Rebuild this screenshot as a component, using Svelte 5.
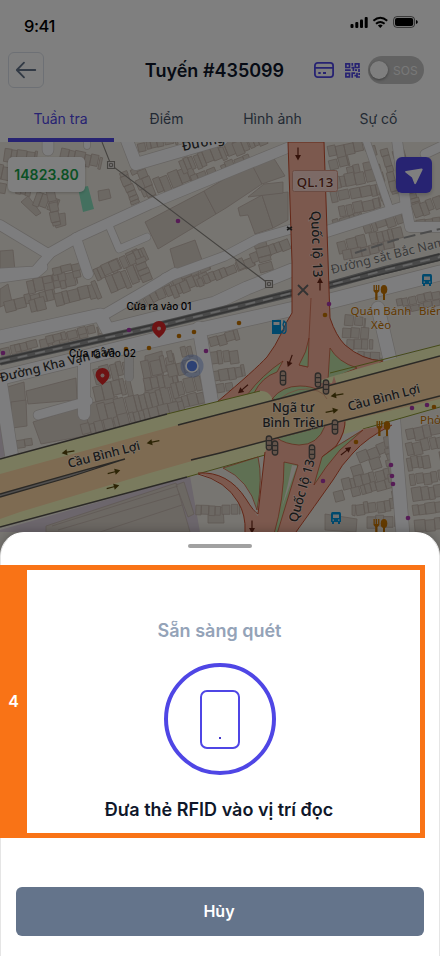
<script>
  const tabs = ['Tuần tra', 'Điểm', 'Hình ảnh', 'Sự cố'];

  // Rows of houses: x, y, angle, length, depth
  const rows = [
    [0, 146, 8, 38, 15], [0, 163, 12, 60, 15], [0, 181, 10, 32, 10], [62, 147, 12, 42, 14],
    [66, 160, 12, 20, 12], [38, 190, 20, 24, 16], [55, 190, 78, 35, 10],
    [128, 170, 68, 34, 9], [140, 166, 65, 30, 10],
    [152, 178, -22, 46, 17], [146, 168, 68, 30, 10], [178, 160, -22, 96, 15], [190, 176, -22, 62, 10], [218, 147, -22, 60, 14], [137, 143, -12, 40, 9],
    [3, 300, -14, 52, 12], [26, 280, -12, 50, 15], [28, 298, -14, 70, 15], [90, 280, -22, 50, 20], [42, 276, -12, 38, 8],
    [52, 268, -13, 28, 8], [92, 268, -24, 60, 14], [108, 262, -24, 35, 12],
    [0, 348, -13, 100, 10], [14, 344, -14, 82, 8], [98, 334, -14, 50, 5],
    [145, 256, 68, 24, 12], [128, 300, -28, 60, 15], [155, 290, -22, 55, 13],
    [170, 276, -24, 40, 10], [196, 278, -22, 60, 10], [235, 259, -22, 56, 12], [268, 240, 75, 30, 14],
    [92, 367, -14, 36, 17], [92, 385, -13, 38, 18], [96, 403, -14, 80, 20], [143, 378, -12, 34, 14],
    [140, 360, -12, 34, 18], [166, 350, -14, 28, 12], [166, 365, -14, 28, 14], [170, 382, -14, 30, 16], [175, 397, -14, 28, 13], [80, 424, -14, 105, 13],
    [208, 337, -16, 30, 11], [208, 352, -8, 30, 14], [212, 370, -10, 32, 12], [216, 384, -10, 16, 9],
    [327, 146, -12, 40, 13], [328, 160, -14, 20, 12], [346, 166, -12, 28, 14], [330, 177, -12, 50, 13], [330, 192, -12, 52, 12], [330, 207, -12, 50, 12], [332, 220, -18, 30, 7],
    [376, 145, 75, 60, 9], [388, 148, 75, 46, 8], [405, 148, 74, 60, 12], [411, 205, -20, 30, 14], [410, 221, -8, 30, 8],
    [336, 240, -14, 66, 14], [342, 250, -12, 52, 10], [362, 223, -18, 40, 12],
    [340, 314, 5, 26, 11], [343, 326, 4, 26, 12], [347, 338, 2, 26, 12], [358, 350, 3, 22, 10], [370, 358, 0, 12, 9],
    [396, 299, -12, 44, 8], [406, 306, -12, 34, 6],
    [356, 453, -22, 38, 12], [350, 466, -18, 46, 12], [341, 479, -14, 53, 12], [333, 492, -15, 65, 11], [355, 503, -8, 42, 12], [367, 515, 0, 34, 12],
    [390, 436, 80, 90, 8], [405, 428, -12, 40, 13], [405, 443, -13, 36, 13], [406, 457, -10, 34, 14], [409, 474, -8, 32, 12], [411, 488, -9, 30, 14], [412, 505, -8, 30, 12], [414, 519, -5, 28, 12],
    [196, 505, 2, 26, 10], [222, 503, 0, 18, 11],
    [16, 440, -8, 16, 8],
  ];

  let seed = 11;
  const rnd = () => {
    seed = (seed * 16807) % 2147483647;
    return seed / 2147483647;
  };
  const houses = rows.map(([x, y, a, len, d]) => {
    let out = '';
    let p = 0;
    while (p < len) {
      const w = Math.min(len - p, 4 + rnd() * 7);
      const t = rnd() * d * 0.2;
      const h = d * (0.78 + rnd() * 0.2);
      if (rnd() > 0.08) out += `M${p.toFixed(1)} ${t.toFixed(1)}h${w.toFixed(1)}v${h.toFixed(1)}h${(-w).toFixed(1)}z`;
      p += w + (rnd() > 0.75 ? 1.5 : 0);
    }
    return { x, y, a, d: out };
  });

  const bigBuildings = [
    'M145 222 204 191 216 214 158 249z', 'M204 191 252 163 262 184 226 208 216 214z', 'M252 165 273 157 285 176 262 184z',
    'M238 208 262 195 273 228 255 234 248 215 240 216z', 'M262 195 288 192 288 220 273 228z', 'M248 197 264 184 283 182 283 193z',
    'M170 249 195 240 202 260 176 272z', 'M0 251 13 250 15 271 0 274z', 'M0 289 8 284 12 302 0 307z',
    'M21 202 28 196 41 213 36 216z', 'M98 191 109 189 111 198 99 201z', 'M52 215 65 213 66 225 56 228z',
    'M26 391 76 378 77 400 28 404z', 'M4 388 24 382 26 405 6 410z', 'M145 356 162 351 165 395 145 400z',
    'M11 402 26 400 27 426 12 428z', 'M33 422 86 405 95 434 41 444z', 'M84 405 117 396 124 426 90 432z', 'M46 526 176 483 190 532 46 532z',
    'M176 485 184 482 194 514 188 517z', 'M325 514 357 519 356 532 325 530z', 'M352 505 356 505 355 516 352 515z', 'M208 507 223 507 224 523 208 523z',
  ];

  const roads = [
    [10, 'M0 225 48 254 80 236 150 204 292 146'], [9, 'M0 273 35 271 50 254'], [10, 'M76 238 88 274'], [7, 'M108 223 119 249 147 237'],
    [11, 'M48 138V150'], [6, 'M87 138V146'], [12, 'M126 138 136 164 222 139'],
    [11, 'M0 277 36 272 42 267'], [9, 'M165 278 225 256 257 239 295 228'], [10, 'M102 316 145 291 175 273'],
    [13, 'M0 337 100 315 108 330 215 303 247 288 292 270'],
    [14, 'M0 378 150 341 292 309'], [15, 'M326 302 440 273'], [12, 'M84 360V414'], [13, 'M0 380 12 458'],
    [13, 'M199 328 213 410'], [8, 'M129 358V377'], [9, 'M38 415 88 401'],
    [7, 'M366 140 389 207'], [10, 'M397 140 406 207 410 227 440 227'], [11, 'M325 232 404 207'], [9, 'M425 154 444 145'],
    [13, 'M378 308 391 364'], [13, 'M393 412 403 535'],
  ];

  const dots = [
    [178, 221, 'p'], [3, 353, 'p'], [129, 330, 'p'], [206, 351, 'p'], [329, 304, 'p'], [412, 408, 'p'], [427, 405, 'p'],
    [391, 465, 'p'], [392, 476, 'p'], [393, 484, 'p'], [408, 518, 'p'], [323, 481, 'p'],
    [126, 349, 'o'], [149, 348, 'o'], [179, 336, 'o'], [194, 332, 'o'], [239, 323, 'o'], [325, 315, 'o'], [356, 442, 'o'], [434, 407, 'o'],
  ];
  const arrows = [
    [298, 154, 90], [320, 284, -90], [290, 361, 110], [243, 389, 140], [337, 395, 170], [68, 452, 170], [153, 442, 168],
    [114, 472, -15], [113, 487, -15], [332, 411, -12], [346, 451, -38], [252, 527, 90],
  ];
  const signals = [[283, 378], [318, 380], [326, 387], [269, 443], [275, 448], [312, 452], [335, 427]];
  const food = [[380, 292], [383, 428], [380, 526]];
  const buses = [[427, 280], [336, 518]];
  const pins = [[159, 338], [102.5, 385]];
</script>

<div class="screen">
  <div class="page">
    <header>
      <div class="status">
        <span class="time">9:41</span>
        <svg width="69" height="14" viewBox="0 0 69 14">
          <rect x="0.5" y="8" width="3" height="4" rx="1" /><rect x="5.3" y="6" width="3" height="6" rx="1" />
          <rect x="10" y="3.5" width="3" height="8.5" rx="1" /><rect x="14.7" y="1" width="3" height="11" rx="1" />
          <g fill="none" stroke="#000" stroke-width="2"><path d="M23.4 4.7q6.9-6 13.8 0M26 7.8q4.3-3.6 8.6 0" /></g>
          <path d="M27.9 9.6q2.4-2 4.8 0L30.3 12z" />
          <rect x="43.6" y=".6" width="21" height="10.8" rx="3.3" fill="none" stroke="#000" stroke-opacity=".6" />
          <rect x="45" y="2" width="18.2" height="8" rx="2" /><path d="M66 4q1.8.5 1.8 2T66 8z" />
        </svg>
      </div>
      <div class="bar">
        <button class="back" aria-label="Quay lại">
          <svg width="22" height="18" viewBox="0 0 22 18" fill="none" stroke="#64748b" stroke-width="1.8" stroke-linecap="round" stroke-linejoin="round"><path d="M20.3 9H2M9 1.7 1.8 9 9 16.3" /></svg>
        </button>
        <h1>Tuyến #435099</h1>
        <div class="tools">
          <svg width="20" height="16" viewBox="0 0 20 16" fill="none" stroke="#4f46e5" stroke-width="1.8"><rect x=".9" y=".9" width="18.2" height="14.2" rx="2.8" /><path d="M1 5.9h18M4.3 11h2.4M9 11h3" /></svg>
          <svg width="15" height="15" viewBox="0 0 15 15" fill="none" stroke="#4f46e5" stroke-width="1.7">
            <path d="M.9.9h3.6v3.6H.9zM10.3.9h3.6v3.600h-3.600zM.9 10.3h3.6v3.6H.9zM7.3 0v2.7M6.400 4.7h2V8M0 7.2h5.7M10 7.2h2M14 6v3M7.2 14.8v-4.7h3M9.4 12.700H12v-3M11 14h4M14.2 10v2" />
          </svg>
          <div class="toggle"><i></i><span>SOS</span></div>
        </div>
      </div>
      <nav>
        {#each tabs as tab, i}
          <span class:active={i === 0}>{tab}</span>
        {/each}
      </nav>
    </header>

    <div class="map">
      <svg class="tiles" width="440" height="420" viewBox="0 142 440 420">
        <rect y="142" width="440" height="420" fill="#efebe2" />
        <path d="M0 415 8 455 0 458zM0 530 190 476 200 532H0z" fill="#d8ccd8" />
        <path d="M78 188 88 186 94 209 83 212z" fill="#88e0be" />
        <g fill="#d9d0c7" stroke="#c0b3a9" stroke-width=".8">
          {#each bigBuildings as d}<path {d} />{/each}
          {#each houses as h}<path d={h.d} transform="translate({h.x} {h.y}) rotate({h.a})" />{/each}
          <path d="M52 526 178 486M58 530 180 494M100 532 182 505" fill="none" />
        </g>
        <g fill="none" stroke-linecap="round" stroke-linejoin="round">
          {#each roads as [w, d]}<path {d} stroke="#cfcac6" stroke-width={w + 1.4} />{/each}
          {#each roads as [w, d]}<path {d} stroke="#fafafc" stroke-width={w} />{/each}
        </g>
        <path d="M129 358V377" stroke="#cbc7c2" stroke-width="10" stroke-linecap="round" stroke-dasharray=".5 3" opacity=".5" />

        <g fill="none">
          <path d="M0 361.5 150 328 240 306 292 293 330 285 385 270 440 257" stroke="#929292" stroke-width="8" />
          <path d="M0 359 150 325.5 240 303.5 292 291 330 283 385 268 440 254M0 364 150 330.5 240 308.5 292 295 330 287 440 260" stroke="#6a6a6a" stroke-width="1.5" />
          <path d="M0 361.5 150 328 240 306 292 293 330 285 385 270 440 257" stroke="#ccc" stroke-width="1.8" stroke-dasharray="10 8" />
          <path d="M355 253 395 240 440 229" stroke="#999" stroke-width="2" stroke-dasharray="12 5" />
        </g>

        <path d="M217 402Q255 370 267 357 276 345 281 334 286 322 292 313V262L288 142H324L330 318Q336 336 345 345 362 360 383 361L355 377 330 390 320 420 250 430z" fill="#f9b29c" stroke="#c84e2f" stroke-width="1" />
        <path d="M311 298 309 338M308 367 299 365" stroke="#d0694c" stroke-width=".8" fill="none" />
        <g fill="#bfe0a6" stroke="#c84e2f" stroke-width=".7">
          <path d="M309 338 308 367 299 365Q307 352 309 338z" /><path d="M330 348Q338 362 357 368L328 380z" />
          <path d="M283 361 277 372Q262 377 254 393L247 395Q262 375 283 361z" />
        </g>
        <path d="M0 459 167 414 260 391Q268 390 272 398L330 377 440 345V407L363 429 220 467 187 477 0 527z" fill="#f4f7bd" />
        <path d="M167 414 260 391M330 373 440 345M187 477 265 455M363 429 440 407" fill="none" stroke="#8b9630" />
        <path d="M270 404 273 396Q284 383 304 383H332L334 376 340 395 320 410z" fill="#f9b29c" />
        <path d="M198 473Q228 471 246 499 254 512 258 516L265 452 272 436 345 414Q347 432 337 446L322 457 337 446 363 429 392 425Q366 438 353 453 342 464 333 480 314 507 300 526L296 534H245Q246 515 238 502 226 481 198 473z" fill="#f9b29c" />
        <path d="M198 473Q228 471 246 499 254 512 258 514L265 452M345 418Q346 432 336 446L322 457M392 425Q366 438 353 453 342 464 333 480 314 507 296 532M198 474Q226 481 238 502 246 515 245 532" fill="none" stroke="#c84e2f" />
        <g fill="#bfe0a6" stroke="#c84e2f" stroke-width=".7">
          <path d="M272 399Q282 386 300 386 312 386 320 391L300 403z" />
          <path d="M277 438 325 426Q318 445 299 445 285 444 277 438z" />
          <path d="M223 468 258 457Q263 478 257 510 249 480 223 468z" /><path d="M284 462 298 465 277 534H274Q284 500 284 462z" />
          <path d="M322 457 337 446 363 430 340 450Q325 467 314 485z" />
        </g>
        <path d="M292 465 297 466 282 507Q288 486 292 465z" fill="#f0ece2" />
        <path d="M0 474 178 425 290 396 440 356V399L338 423 220 453 150 473 20 512 0 519z" fill="#fcd6a4" />
        <path d="M278 400Q298 384 318 391 325 394 327 399" fill="none" stroke="#e3a985" />
        <g fill="none" stroke="#57534c" stroke-width="1.5">
          <path d="M0 459 167 414M178 425 290 396 440 356M191 460 220 453 338 422 440 396M0 527 187 477" />
          <path d="M0 494 70 474 125 459 70 477 0 497" fill="#a4a1a0" stroke-width="1.3" />
        </g>

        <g fill="none" stroke="#8a8680" stroke-width="1.1">
          <path d="M102 142 111 165 269 284" />
          <g fill="#e6e2df"><path d="M107.500 161.500h7v7h-7zM265.500 280.500h7v7h-7z" /></g>
          <circle cx="111" cy="165" r="1.700" /><circle cx="269" cy="284" r="1.700" />
          <path d="M298 285 308 295M308 285 298 295" stroke="#666" stroke-width="1.800" />
          <path d="M287 227 292 230M287 230 292 227" stroke="#333" stroke-width="1.500" />
        </g>
        {#each signals as [x, y]}
          <g transform="translate({x} {y})" fill="#c9a894" stroke="#5a5653" stroke-width="1.300"><rect x="-2.700" y="-7" width="5.400" height="14" rx="2.500" /><path d="M-2.500-2.300h5M-2.500 2.300h5" /></g>
        {/each}
        {#each arrows as [x, y, a]}
          <path d="M-6.500-.6H1V-3L6.500 0 1 3V.6H-6.500z" transform="translate({x} {y}) rotate({a})" fill={y < 400 && x < 330 || x === 252 || x === 346 ? '#6b2717' : '#59480b'} />
        {/each}
        {#each dots as [x, y, k]}<circle cx={x} cy={y} r="2.300" fill={k === 'p' ? '#ac39ac' : '#c77400'} />{/each}
        {#each food as [x, y]}
          <g transform="translate({x} {y})" fill="#c77400"><path d="M-6.500-7h1.300v5h1v-5h1.300v5h1v-5h1.300v6L-2.500 1v7h-2.300V1L-6.500-1z" /><ellipse cx="4" cy="-2.500" rx="3.300" ry="4.500" /><path d="M3 1h2v7H3z" /></g>
        {/each}
        {#each buses as [x, y]}
          <g transform="translate({x} {y})"><path d="M-3.500-6h7q1.500 0 1.500 2V4H4v2H2V4h-4v2h-2V4h-1v-8q0-2 1.500-2z" fill="#0092da" /><path d="M-3-3.500h6V0h-6zM-3.500 1.500h1.500v1.300h-1.500zM2 1.500h1.500v1.300H2z" fill="#e5e5e5" /></g>
        {/each}
        <g transform="translate(272 320)"><path d="M0 0h9v14H0z" fill="#0092da" /><path d="M1.500 2h6v3h-6z" fill="#eee" /><path d="M9 11q3 1 3-2V7l-1-2 1-4 2 2v8q-1 4-5 1" fill="none" stroke="#0092da" stroke-width="1.300" /></g>

        <g class="labels">
          <rect x="292.500" y="170.500" width="45" height="21" rx="2" fill="#f8d5cc" stroke="#d69886" />
          <text x="315" y="187" text-anchor="middle" font-size="13.200" letter-spacing=".1" fill="#6d2a18">QL.13</text>
          <text transform="translate(311 211) rotate(88)" font-size="13.200">Quốc lộ 13</text>
          <text class="thin" transform="translate(332 274) rotate(-14)" font-size="12.500" fill="#777">Đường sắt Bắc Nam</text>
          <text transform="translate(183 151) rotate(-12)" font-size="13">Đường</text>
          <text transform="translate(1 382) rotate(-13.800)" font-size="12.400">Đường Kha Vạn Cân</text>
          <text transform="translate(69 468) rotate(-14.500)" font-size="12.400">Cầu Bình Lợi</text>
          <text transform="translate(349 411) rotate(-14.500)" font-size="12.400">Cầu Bình Lợi</text>
          <text x="293" y="412" text-anchor="middle" font-size="12.700">Ngã tư</text>
          <text x="293" y="427" text-anchor="middle" font-size="12.700">Bình Triệu</text>
          <text transform="translate(297 523) rotate(-74)" font-size="12.800">Quốc lộ 13</text>
          <g class="thin" fill="#c77400" font-size="11.500"><text x="381" y="315" text-anchor="middle">Quán Bánh</text><text x="381" y="329" text-anchor="middle">Xèo</text><text x="419" y="315">Biển</text><text x="420" y="424">Phở</text></g>
        </g>

        {#each pins as [x, y]}
          <g transform="translate({x} {y})"><path d="M0 0Q-7-6-7-10a7 7 0 0 1 14 0Q7-6 0 0z" fill="#dc2626" /><circle cy="-9.500" r="2" fill="#e5c5bd" /></g>
        {/each}
        <circle cx="192" cy="366" r="11.500" fill="#5b82db" opacity=".4" />
        <circle cx="192" cy="366" r="6" fill="#5b82e8" stroke="#fff" stroke-width="1.700" />
        <g class="points"><text x="126.500" y="310" textLength="65">Cửa ra vào 01</text><text x="69" y="357" textLength="67">Cửa ra vào 02</text></g>
      </svg>
      <div class="controls">
        <strong>14823.80</strong>
        <button aria-label="Định vị"><svg width="18" height="17" viewBox="0 0 18 17"><path d="M.5 4.500Q-.5 3.500 1 3L16.500.5Q18 .5 17.500 2L11 15.500Q10 17 9.300 15.500L7 9.500z" fill="#fff" /></svg></button>
      </div>
    </div>
  </div>

  <div class="backdrop"></div>

  <section class="sheet">
    <div class="handle"></div>
    <div class="scan">
      <div class="step">4</div>
      <div class="content">
        <p class="ready">Sẵn sàng quét</p>
        <div class="ring"><div class="phone"><i></i></div></div>
        <p class="hint">Đưa thẻ RFID vào vị trí đọc</p>
      </div>
    </div>
    <button class="cancel">Hủy</button>
  </section>
</div>

<style>
  :global(body) { background: #fff; overflow: hidden; }
  * { box-sizing: border-box; margin: 0; }
  .screen { position: relative; width: 440px; height: 956px; overflow: hidden; display: flex; flex-direction: column; font-family: Inter, "Noto Sans", sans-serif; color: #0f172a; }
  .page { height: 532px; flex: none; }
  button { border: 0; padding: 0; font: inherit; display: flex; align-items: center; justify-content: center; }
  header { height: 142px; background: #fff; display: flex; flex-direction: column; }
  .status { height: 52px; display: flex; justify-content: space-between; align-items: flex-start; padding: 16px 21px 0 24px; }
  .status svg { margin-top: 0; }
  .time { font-size: 16.5px; line-height: 20px; font-weight: 500; color: #000; letter-spacing: -.4px; }
  .bar { height: 36px; display: grid; grid-template-columns: 100px 214px 102px; align-items: center; padding: 0 16px 0 8px; }
  .back { width: 36px; height: 36px; background: #fff; border: 1px solid #dbe1ea; border-radius: 6px; }
  h1 { font-size: 18px; line-height: 28px; font-weight: 600; text-align: center; padding-top: 2px; margin-left: -1px; }
  .tools { display: flex; align-items: center; gap: 11px; margin-left: -8px; flex: none; }
  .tools svg { flex: none; }
  .toggle { width: 56px; height: 28px; border-radius: 14px; background: #c4c4c4; display: flex; align-items: center; padding-left: 2px; flex: none; margin-left: -3px; }
  .toggle i { width: 18px; height: 18px; border-radius: 50%; background: #fff; box-shadow: 0 1px 3px #0006; }
  .toggle span { margin-left: 5px; font-size: 12px; color: #f1f1f1; }
  nav { height: 54px; padding: 0 8px; display: flex; }
  nav span { width: 106px; text-align: center; font-size: 14px; line-height: 20px; padding-top: 21px; padding-right: 1px; color: #475569; border-bottom: 4px solid transparent; }
  nav .active { color: #4f46e5; border-color: #4f46e5; }
  .map { position: relative; height: 390px; }
  .tiles { display: block; }
  .labels { font-family: "Noto Sans", sans-serif; fill: #333; font-weight: 500; }
  .labels text { stroke: #ffffff70; stroke-width: 1.5px; paint-order: stroke; }
  .labels .thin { font-weight: 400; }
  .points { font-family: Inter, sans-serif; font-size: 10px; font-weight: 500; fill: #000; }
  .controls { position: absolute; inset: 15px 8px auto; display: flex; justify-content: space-between; }
  .controls strong { height: 35px; width: 77px; background: #fff; border-radius: 5px; text-align: center; font-size: 14px; font-weight: 600; line-height: 35px; color: #16a34a; box-shadow: 0 1px 3px #0003; letter-spacing: .1px; }
  .controls button { width: 36px; height: 36px; border-radius: 6px; background: #4f46e5; box-shadow: 0 2px 4px #0003; }
  .controls svg { margin-top: 3px; }
  .backdrop { position: absolute; inset: 0; background: #00000080; }
  .sheet { position: relative; width: 440px; height: 424px; flex: none; background: #fff; border: 1px solid #e5e5e5; border-top-color: #fff; border-bottom: 0; border-radius: 24px 24px 0 0; box-shadow: 0 -2px 8px #0003; display: flex; flex-direction: column; }
  .handle { width: 64px; height: 4px; border-radius: 2px; background: #a1a1a1; margin: 11px auto 17px; }
  .scan { width: 426px; height: 273px; margin-left: -1px; display: flex; flex: none; }
  .step { width: 27px; background: #f97316; color: #fff; font-weight: 600; font-size: 16px; display: flex; align-items: center; justify-content: center; padding-bottom: 1px; }
  .content { width: 398px; border: 5px solid #f97316; border-left: 0; display: flex; flex-direction: column; align-items: center; padding-top: 47px; padding-right: 7px; }
  .ready, .hint { font-size: 18px; line-height: 28px; font-weight: 600; white-space: nowrap; margin-left: -1px; }
  .ready { color: #94a3b8; }
  .hint { margin-left: -2px; }
  .ring { width: 112px; height: 112px; border: 4px solid #4f46e5; border-radius: 50%; margin: 18px 0 21px; display: flex; align-items: center; justify-content: center; }
  .phone { width: 40px; height: 59px; border: 2px solid #4f46e5; border-radius: 7px; display: flex; justify-content: center; align-items: flex-end; padding-bottom: 8px; }
  .phone i { width: 2px; height: 2px; background: #4338ca; }
  .cancel { width: 408px; height: 49px; margin: 49px 15px 0; padding: 0 2px 2px 0; background: #64748b; color: #fff; border-radius: 6px; font-size: 16px; font-weight: 600; flex: none; }
</style>
